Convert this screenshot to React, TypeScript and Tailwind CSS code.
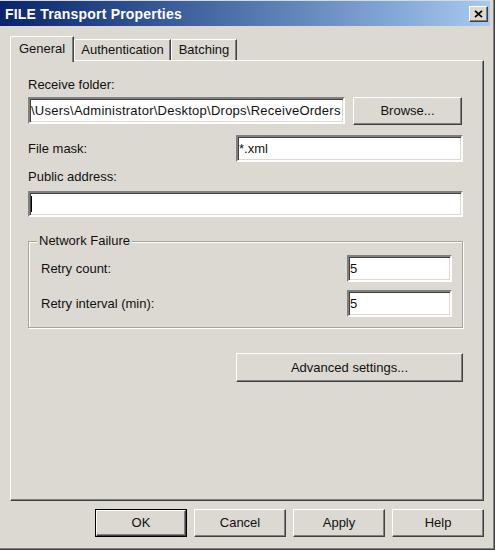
import React from "react";

const face = "bg-[#dcd9d2]";
const raised =
  "border border-t-white border-l-white border-r-[#404040] border-b-[#404040] shadow-[inset_-1px_-1px_0_#808080]";
const sunken =
  "border-2 border-t-[#808080] border-l-[#808080] border-r-white border-b-white shadow-[inset_1px_1px_0_#404040,inset_-1px_-1px_0_#dcd9d2] bg-white";

function Button({ label, className = "" }: { label: string; className?: string }) {
  return (
    <button type="button" className={`flex items-center justify-center ${face} ${raised} ${className}`}>
      {label}
    </button>
  );
}

function TextBox({ className = "", children }: { className?: string; children?: React.ReactNode }) {
  return (
    <div className={`flex items-center overflow-hidden whitespace-nowrap ${sunken} ${className}`}>{children}</div>
  );
}

function CloseGlyph() {
  return (
    <svg width="9" height="8" viewBox="0 0 9 8" aria-hidden="true">
      <path d="M1 0.8L8 7.2M8 0.8L1 7.2" stroke="black" strokeWidth="1.7" />
    </svg>
  );
}

export default function App() {
  return (
    <div
      className={`w-[495px] h-[550px] ${face} border-r border-b border-[#404040] font-['Liberation_Sans',Arial,sans-serif] text-[13px] leading-[16px] text-[#111]`}
    >
      <div className="flex h-full flex-col border-r border-b border-[#808080] pt-px pr-[3px]">
        {/* title bar */}
        <div className="flex h-[25px] items-center justify-between bg-gradient-to-r from-[#0a246a] to-[#a6caf0] pl-[5px] pr-[2px]">
          <span className="text-[14px] font-bold tracking-[0.2px] text-white">FILE Transport Properties</span>
          <span className={`flex h-[16px] w-[19px] items-center justify-center ${face} ${raised}`}>
            <CloseGlyph />
          </span>
        </div>

        {/* tabs */}
        <div className="relative z-10 mt-[10px] -mb-[2px] flex items-end pl-[10px]">
          <div
            className={`flex h-[26px] w-[64px] justify-center rounded-tl-[2px] pt-[4px] ${face} border-t border-l border-r border-t-white border-l-white border-r-[#404040] shadow-[inset_-1px_0_0_#808080]`}
          >
            General
          </div>
          <div
            className={`mb-[2px] flex h-[21px] w-[97px] justify-center rounded-tl-[2px] pt-[2px] ${face} border-t border-l border-r border-t-white border-l-white border-r-[#404040] shadow-[inset_-1px_0_0_#808080]`}
          >
            Authentication
          </div>
          <div
            className={`mb-[2px] flex h-[21px] w-[66px] justify-center rounded-tl-[2px] pt-[2px] ${face} border-t border-l border-r border-t-white border-l-white border-r-[#404040] shadow-[inset_-1px_0_0_#808080]`}
          >
            Batching
          </div>
        </div>

        {/* tab page */}
        <div className={`ml-[10px] flex h-[441px] w-[474px] flex-col pl-[17px] pr-[20px] ${raised}`}>
          <div className="mt-[16px] h-[16px]">Receive folder:</div>
          <div className="mt-[4px] flex items-start gap-[8px]">
            <TextBox className="h-[27px] w-[317px] pl-[1px] tracking-[0.25px]">
              \Users\Administrator\Desktop\Drops\ReceiveOrders
            </TextBox>
            <Button label="Browse..." className="h-[28px] w-[109px]" />
          </div>

          <div className="mt-[10px] flex h-[27px] items-center justify-between">
            <span>File mask:</span>
            <TextBox className="h-[27px] w-[227px] pl-[1px]">*.xml</TextBox>
          </div>

          <div className="mt-[7px] h-[16px]">Public address:</div>
          <TextBox className="mt-[6px] h-[26px] w-full pl-[1px]">
            <span className="h-[16px] w-px bg-black" />
          </TextBox>

          <fieldset className="mt-[16px] h-[95px] border border-[#a7a39b] pl-[12px] pr-[10px] shadow-[inset_1px_1px_0_white,1px_1px_0_white]">
            <legend className={`-ml-[4px] px-[2px] ${face}`}>Network Failure</legend>
            <div className="mt-[6px] flex h-[27px] items-center justify-between">
              <span>Retry count:</span>
              <TextBox className="h-[27px] w-[105px] pl-px">5</TextBox>
            </div>
            <div className="mt-[8px] flex h-[27px] items-center justify-between">
              <span>Retry interval (min):</span>
              <TextBox className="h-[27px] w-[105px] pl-px">5</TextBox>
            </div>
          </fieldset>

          <Button label="Advanced settings..." className="mt-[25px] h-[29px] w-[227px] self-end" />
        </div>

        {/* dialog buttons */}
        <div className="mt-[8px] flex justify-end gap-[7px] pr-[6px]">
          <div className="border border-black">
            <Button label="OK" className="h-[26px] w-[90px]" />
          </div>
          <Button label="Cancel" className="h-[28px] w-[92px]" />
          <Button label="Apply" className="h-[28px] w-[92px]" />
          <Button label="Help" className="h-[28px] w-[92px]" />
        </div>
      </div>
    </div>
  );
}
